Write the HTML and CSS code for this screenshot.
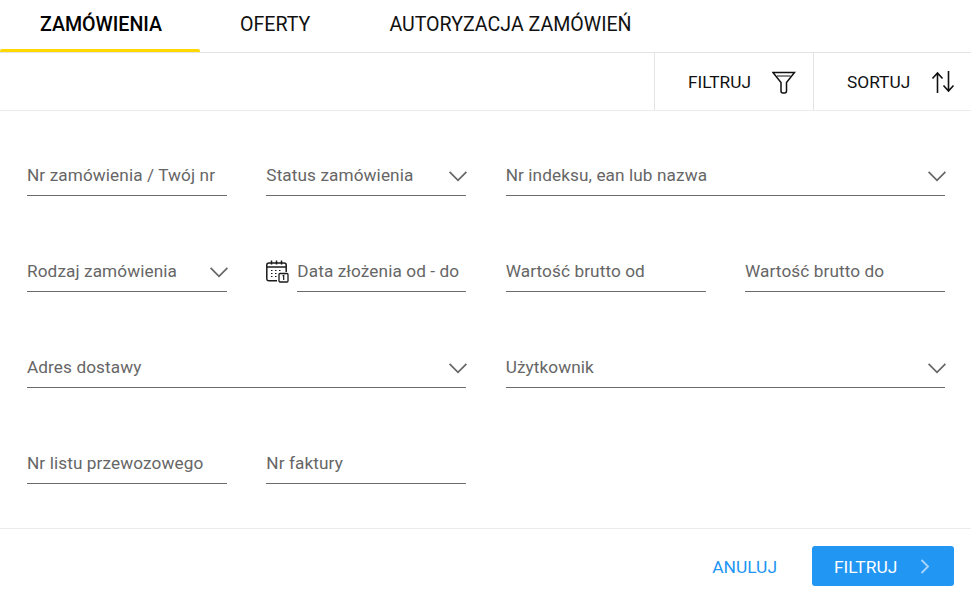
FILE: index.html
```html
<!DOCTYPE html>
<html lang="pl">
<head>
<meta charset="utf-8">
<title>Zamówienia</title>
<link rel="stylesheet" href="styles.css">
</head>
<body>
<nav class="tabs">
  <a class="tab tab-active">ZAMÓWIENIA</a>
  <a class="tab tab-offers">OFERTY</a>
  <a class="tab tab-auth">AUTORYZACJA ZAMÓWIEŃ</a>
</nav>
<div class="toolbar">
  <button class="tool tool-filter">FILTRUJ
    <svg class="tool-icon" width="24" height="24" viewBox="0 0 24 24" fill="none" stroke="#111" stroke-width="1.5"><path d="M1 2.500H22.500L14.500 12.500V21Q14.500 23 12.500 23H11Q9 23 9 21V12.500Z"/><path d="M5 6H18.500" stroke-width="1"/></svg>
  </button>
  <button class="tool tool-sort">SORTUJ
    <svg class="tool-icon" width="24" height="24" viewBox="0 0 24 24" fill="none" stroke="#111" stroke-width="1.6"><path d="M6.500 23V3M1.500 8.500L6.500 3L11.500 8.500"/><path d="M17.500 1V21M12.500 15.500L17.500 21L22.500 15.500"/></svg>
  </button>
</div>
<form class="form">
  <div class="field"><span class="label">Nr zamówienia / Twój nr</span></div>
  <div class="field"><span class="label">Status zamówienia</span><svg class="chev" width="18" height="11" viewBox="0 0 18 11" fill="none" stroke="#666" stroke-width="1.7"><path d="M.6 .8L9 9.400L17.400 .8"/></svg></div>
  <div class="field span-2"><span class="label">Nr indeksu, ean lub nazwa</span><svg class="chev" width="18" height="11" viewBox="0 0 18 11" fill="none" stroke="#666" stroke-width="1.7"><path d="M.6 .8L9 9.400L17.400 .8"/></svg></div>

  <div class="field"><span class="label">Rodzaj zamówienia</span><svg class="chev" width="18" height="11" viewBox="0 0 18 11" fill="none" stroke="#666" stroke-width="1.7"><path d="M.6 .8L9 9.400L17.400 .8"/></svg></div>
  <div class="date">
    <svg class="cal" width="23" height="23" viewBox="0 0 23 23" fill="none" stroke="#1a1a1a" stroke-width="1.500"><path d="M11 20.750H3Q.8 20.750 .8 18.500V5Q.8 3 3 3H18Q20.200 3 20.200 5V12"/><path d="M1 7H20"/><path d="M5.500 .5V4.500M10.500 .5V4.500M15.500 .5V4.500"/><path d="M5 10.500H6.500M9 10.500H10.500M13 10.500H14.500M5 13.500H6.500M9 13.500H10.500M5 16.500H6.500M9 16.500H10.500" stroke-width="1.200"/><rect x="13" y="13.500" width="9" height="8.500" rx="1" stroke-width="1.300"/><path d="M16.500 16L17.700 15.500V20" stroke-width="1.200"/></svg>
    <div class="field field-date"><span class="label">Data złożenia od - do</span></div>
  </div>
  <div class="field"><span class="label">Wartość brutto od</span></div>
  <div class="field"><span class="label">Wartość brutto do</span></div>

  <div class="field span-2"><span class="label">Adres dostawy</span><svg class="chev" width="18" height="11" viewBox="0 0 18 11" fill="none" stroke="#666" stroke-width="1.7"><path d="M.6 .8L9 9.400L17.400 .8"/></svg></div>
  <div class="field span-2"><span class="label">Użytkownik</span><svg class="chev" width="18" height="11" viewBox="0 0 18 11" fill="none" stroke="#666" stroke-width="1.7"><path d="M.6 .8L9 9.400L17.400 .8"/></svg></div>

  <div class="field"><span class="label">Nr listu przewozowego</span></div>
  <div class="field"><span class="label">Nr faktury</span></div>
</form>
<footer class="footer">
  <button class="cancel" type="button">ANULUJ</button>
  <button class="submit" type="button"><span class="submit-text">FILTRUJ</span>
    <svg width="10" height="15" viewBox="0 0 10 15" fill="none" stroke="#a9d4fa" stroke-width="1.9"><path d="M1.500 1L8 7.500L1.500 14"/></svg>
  </button>
</footer>
</body>
</html>
```
FILE: styles.css
```css
* { box-sizing: border-box; }
html, body { margin: 0; padding: 0; }
body {
  width: 971px;
  height: 610px;
  background: #fff;
  font-family: Roboto, "Liberation Sans", sans-serif;
  overflow: hidden;
}
.tabs {
  display: flex;
  height: 53px;
  border-bottom: 1px solid #e4e4e4;
}
.tab {
  height: 52px;
  display: flex;
  align-items: center;
  padding-bottom: 2px;
  font-size: 19.6px;
  color: #111;
  line-height: 1;
  white-space: nowrap;
}
.tab-active {
  position: relative;
  width: 200px;
  padding-left: 40px;
  font-weight: 500;
  color: #000;
}
.tab-active::after {
  content: "";
  position: absolute;
  left: 0;
  right: 0;
  bottom: 0;
  height: 3px;
  background: #ffd800;
  border-radius: 2px 2px 0 0;
}
.tab-offers { margin-left: 40px; }
.tab-auth { margin-left: 79px; }
.toolbar {
  display: flex;
  justify-content: flex-end;
  height: 58px;
  border-bottom: 1px solid #ececec;
}
.tool {
  display: flex;
  align-items: center;
  height: 57px;
  padding: 0;
  border: 0;
  border-left: 1px solid #e4e4e4;
  background: none;
  font: 400 17.3px Roboto, sans-serif;
  color: #111;
}
.tool-filter { width: 159px; padding-left: 33px; gap: 21.500px; }
.tool-sort { width: 158px; padding-left: 33px; gap: 21px; }
.form {
  display: grid;
  grid-template-columns: 200px 200px 200px 200px;
  column-gap: 39.33px;
  height: 418px;
  padding: 0 0 0 27px;
  border-bottom: 1px solid #ececec;
  align-items: end;
  align-content: start;
  grid-template-rows: 85px 96px 96px 96px;
}
.field {
  display: flex;
  align-items: center;
  justify-content: space-between;
  height: 40px;
  padding-bottom: 2px;
  border-bottom: 1px solid #6b6b6b;
}
.span-2 { grid-column: span 2; }
.label {
  font-size: 17.2px;
  letter-spacing: 0.1px;
  color: #666;
  white-space: nowrap;
}
.chev { margin-right: -1px; margin-top: 4px; flex: none; }
.date { display: flex; align-items: flex-end; }
.cal { flex: none; margin: 0 8px 9px 0; }
.field-date { flex: 1; }
.footer {
  display: flex;
  justify-content: flex-end;
  align-items: center;
  height: 80px;
  padding: 0 17px 6px 0;
}
.cancel {
  padding: 2px 0 0;
  margin-right: 35px;
  border: 0;
  background: none;
  font: 400 17.4px Roboto, sans-serif;
  color: #2196f3;
}
.submit {
  display: flex;
  align-items: center;
  justify-content: space-between;
  width: 142px;
  height: 40px;
  padding: 0 24px 0 22px;
  border: 0;
  border-radius: 3px;
  background: #2196f3;
  font: 400 17.4px Roboto, sans-serif;
  color: #fff;
}
.submit-text { padding-top: 2px; }
```
